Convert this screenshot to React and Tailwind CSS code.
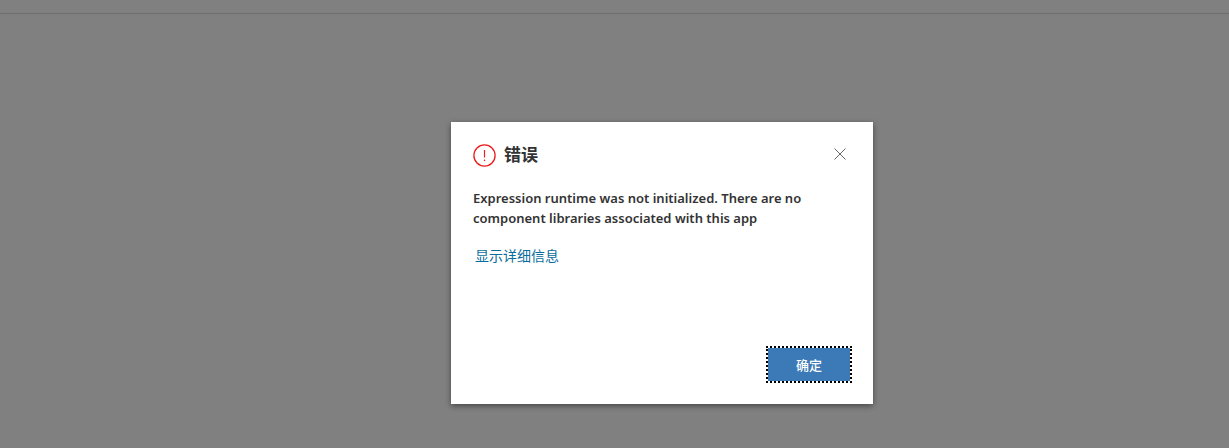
export default function App() {
  return (
    <div className="w-[1229px] h-[448px] bg-[#808080] flex flex-col overflow-hidden font-['Noto_Sans','Noto_Sans_CJK_SC',sans-serif]">
      <div className="h-[14px] shrink-0 border-b border-[#6e6e6e]" />
      <div className="flex justify-center pt-[108px] pl-[95px] pr-0">
        <div className="w-[422px] h-[282px] bg-white shadow-[0_2px_6px_rgba(0,0,0,0.45)] flex flex-col pl-[22px] pr-[21px]">
          <div className="flex items-center h-[24px] mt-[21px]">
            <svg width="23" height="23" viewBox="0 0 23 23" className="shrink-0">
              <circle cx="11.5" cy="11.5" r="10.6" fill="none" stroke="#ee1c1c" strokeWidth="1.3" />
              <path d="M11.5 6V13.5" stroke="#ee1c1c" strokeWidth="1.2" />
              <path d="M11.5 15.6V17" stroke="#ee1c1c" strokeWidth="1.3" />
            </svg>
            <h1 className="ml-[8px] -mt-[2px] text-[17px] leading-[24px] font-bold text-[#333333] font-['Noto_Sans_CJK_SC',sans-serif]">错误</h1>
            <svg width="12" height="12" viewBox="0 0 12 12" className="ml-auto mr-[6px] -mt-[2px]">
              <path d="M0.5 0.5L11.5 11.5M11.5 0.5L0.5 11.5" stroke="#666666" strokeWidth="1" fill="none" />
            </svg>
          </div>
          <p className="mt-[22px] text-[13px] leading-[19.5px] font-semibold text-[#333333] w-[345px]">
            Expression runtime was not initialized. There are no component libraries associated with this app
          </p>
          <a className="mt-[17px] ml-[2px] text-[14px] leading-[20px] text-[#0a6c9c] font-['Noto_Sans_CJK_SC',sans-serif]">显示详细信息</a>
          <div className="mt-auto mb-[21px] flex justify-end">
            <button className="w-[86px] h-[37px] bg-[#3b79b7] bg-clip-padding border-2 border-dotted border-black text-white text-[13px] font-medium font-['Noto_Sans_CJK_SC',sans-serif]">确定</button>
          </div>
        </div>
      </div>
    </div>
  );
}
